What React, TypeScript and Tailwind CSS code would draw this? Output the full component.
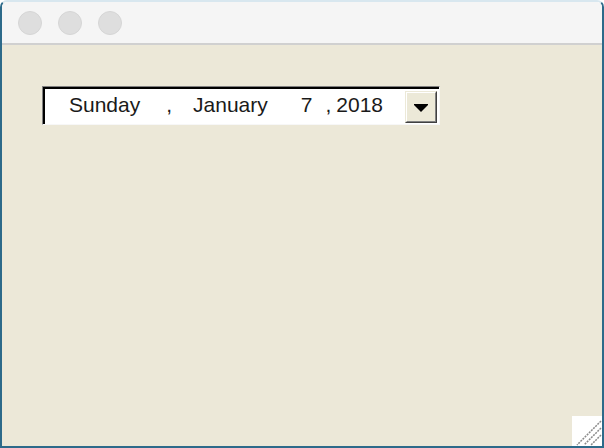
export default function App() {
  return (
    <div className="flex h-[448px] w-[604px] flex-col overflow-hidden rounded-t-[7px] border-2 border-[#2d6a8a] border-t-[#d8e7ef] font-['Liberation_Sans',Arial,sans-serif]">
      {/* title bar */}
      <div className="flex h-[43px] shrink-0 items-center gap-4 border-b-2 border-[#d0d0d0] bg-[#f5f5f5] pl-4">
        <span className="h-6 w-6 rounded-full border border-[#d6d6d6] bg-[#dedede]" />
        <span className="h-6 w-6 rounded-full border border-[#d6d6d6] bg-[#dedede]" />
        <span className="h-6 w-6 rounded-full border border-[#d6d6d6] bg-[#dedede]" />
      </div>

      {/* content */}
      <div className="relative flex-1 bg-[#ece8d8] pl-[40px] pt-[41px]">
        <div className="h-[39px] w-[398px] border-l border-t border-b border-r border-l-[#808080] border-t-[#808080] border-r-[#f7f7f7] border-b-[#f7f7f7]">
          <div className="flex h-full items-center border-l-2 border-t-2 border-black bg-white pl-[24px] text-[21px] leading-none text-[#1a1a1a]">
            <div className="mb-[5px] flex items-center">
              <span>Sunday</span>
              <span className="ml-[26px]">,</span>
              <span className="ml-[21px]">January</span>
              <span className="ml-[33px]">7</span>
              <span className="ml-[13px]">,</span>
              <span className="ml-[5px]">2018</span>
            </div>
            <div className="ml-auto mr-[2px] flex h-[32px] w-[32px] items-center justify-center border border-b-[#404040] border-l-[#ece9d8] border-r-[#404040] border-t-[#ece9d8] bg-[#ece9d8]">
              <div className="flex h-full w-full items-center justify-center border border-b-[#808080] border-l-white border-r-[#808080] border-t-white pt-[2px]">
                <svg width="14" height="8" viewBox="0 0 14 8">
                  <polygon points="0,0 14,0 14,1 7,8 0,1" fill="#000" />
                </svg>
              </div>
            </div>
          </div>
        </div>

        {/* resize grip */}
        <div className="absolute bottom-0 right-0 h-[30px] w-[30px] bg-white">
          <svg width="30" height="30" viewBox="0 0 30 30">
            <g stroke="#8a8a8a" strokeWidth="1.5" strokeDasharray="2 1">
              <line x1="29" y1="5" x2="5" y2="29" />
              <line x1="29" y1="12" x2="12" y2="29" />
              <line x1="29" y1="19" x2="19" y2="29" />
            </g>
          </svg>
        </div>
      </div>
    </div>
  );
}
